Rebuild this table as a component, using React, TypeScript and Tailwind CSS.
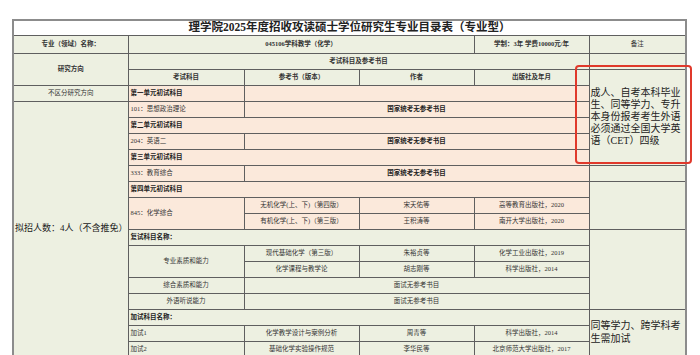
import type { ReactNode } from "react";

const GREEN = "bg-[#edf0e1]";
const PINK = "bg-[#fbe9db]";

type CellProps = {
  children?: ReactNode;
  className?: string;
  colSpan?: number;
  rowSpan?: number;
};

const Td = ({ children, className = "", colSpan, rowSpan }: CellProps) => (
  <td
    colSpan={colSpan}
    rowSpan={rowSpan}
    className={`border border-[#5f5f5f] p-0 px-[2px] text-[6.5px] leading-none text-[#333] ${className}`}>
    {children}
  </td>
);

const remarkTop = "成人、自考本科毕业生、同等学力、专升本身份报考考生外语必须通过全国大学英语（CET）四级";

const App = () => {
  return (
    <div
      className="relative w-[700px] h-[355px] overflow-hidden bg-white pt-[19px] pl-[12px]"
      style={{ fontFamily: '"Liberation Serif", "Noto Sans CJK SC", serif' }}>
      <table className="table-fixed border-collapse border-2 border-[#8c8c8c] w-[673px]">
        <colgroup>
          <col className="w-[115px]" />
          <col className="w-[116px]" />
          <col className="w-[115px]" />
          <col className="w-[115px]" />
          <col className="w-[115px]" />
          <col className="w-[97px]" />
        </colgroup>
        <tbody>
          <tr className="h-[15px]">
            <Td colSpan={6} className="bg-white text-center !text-[11.5px] font-bold !text-[#222]">
              理学院2025年度招收攻读硕士学位研究生专业目录表（专业型）
            </Td>
          </tr>
          <tr className="h-[18px]">
            <Td className={`${GREEN} text-center font-bold`}>专业（领域）名称：</Td>
            <Td colSpan={3} className={`${GREEN} text-center font-bold`}>
              045106学科教学（化学）
            </Td>
            <Td className={`${GREEN} text-center font-bold`}>学制：3年 学费10000元/年</Td>
            <Td className={`${GREEN} text-center`}>备注</Td>
          </tr>
          <tr className="h-[16px]">
            <Td rowSpan={2} className={`${GREEN} text-center font-bold`}>研究方向</Td>
            <Td colSpan={4} className={`${GREEN} text-center font-bold`}>考试科目及参考书目</Td>
            <Td className={GREEN} />
          </tr>
          <tr className="h-[16px]">
            <Td className={`${GREEN} text-center font-bold`}>考试科目</Td>
            <Td className={`${GREEN} text-center font-bold`}>参考书（版本）</Td>
            <Td className={`${GREEN} text-center font-bold`}>作者</Td>
            <Td className={`${GREEN} text-center font-bold`}>出版社及年月</Td>
            <Td rowSpan={6} className={`${GREEN} !px-[1px] align-middle !text-[10px] !leading-[12px] !text-[#222]`}>
              {remarkTop}
            </Td>
          </tr>
          <tr className="h-[16px]">
            <Td className={`${GREEN} text-center`}>不区分研究方向</Td>
            <Td className={`${PINK} font-bold !text-[#222]`}>第一单元初试科目</Td>
            <Td colSpan={3} className={PINK} />
          </tr>
          <tr className="h-[16px]">
            <Td rowSpan={16} className={`${GREEN} whitespace-nowrap !px-[1px] !text-[9px] !text-[#222]`}>
              拟招人数：4人（不含推免）
            </Td>
            <Td className={PINK}>101：思想政治理论</Td>
            <Td colSpan={3} className={`${PINK} text-center font-bold !text-[#222]`}>国家统考无参考书目</Td>
          </tr>
          <tr className="h-[16px]">
            <Td colSpan={4} className={`${PINK} font-bold !text-[#222]`}>第二单元初试科目</Td>
          </tr>
          <tr className="h-[16px]">
            <Td className={PINK}>204：英语二</Td>
            <Td colSpan={3} className={`${PINK} text-center font-bold !text-[#222]`}>国家统考无参考书目</Td>
          </tr>
          <tr className="h-[16px]">
            <Td colSpan={4} className={`${PINK} font-bold !text-[#222]`}>第三单元初试科目</Td>
          </tr>
          <tr className="h-[16px]">
            <Td className={PINK}>333：教育综合</Td>
            <Td colSpan={3} className={`${PINK} text-center font-bold !text-[#222]`}>国家统考无参考书目</Td>
            <Td className={GREEN} />
          </tr>
          <tr className="h-[16px]">
            <Td colSpan={4} className={`${PINK} font-bold !text-[#222]`}>第四单元初试科目</Td>
            <Td rowSpan={3} className={GREEN} />
          </tr>
          <tr className="h-[16px]">
            <Td rowSpan={2} className={PINK}>845：化学综合</Td>
            <Td className={`${PINK} text-center`}>无机化学(上、下)（第四版）</Td>
            <Td className={`${PINK} text-center`}>宋天佑等</Td>
            <Td className={`${PINK} text-center`}>高等教育出版社，2020</Td>
          </tr>
          <tr className="h-[16px]">
            <Td className={`${PINK} text-center`}>有机化学(上、下)（第三版）</Td>
            <Td className={`${PINK} text-center`}>王积涛等</Td>
            <Td className={`${PINK} text-center`}>南开大学出版社，2020</Td>
          </tr>
          <tr className="h-[16px]">
            <Td colSpan={4} className={`${GREEN} font-bold !text-[#222]`}>复试科目名称：</Td>
            <Td rowSpan={5} className={GREEN} />
          </tr>
          <tr className="h-[16px]">
            <Td rowSpan={2} className={`${GREEN} text-center`}>专业素质和能力</Td>
            <Td className={`${GREEN} text-center`}>现代基础化学（第三版）</Td>
            <Td className={`${GREEN} text-center`}>朱裕贞等</Td>
            <Td className={`${GREEN} text-center`}>化学工业出版社，2019</Td>
          </tr>
          <tr className="h-[16px]">
            <Td className={`${GREEN} text-center`}>化学课程与教学论</Td>
            <Td className={`${GREEN} text-center`}>胡志刚等</Td>
            <Td className={`${GREEN} text-center`}>科学出版社，2014</Td>
          </tr>
          <tr className="h-[16px]">
            <Td className={`${GREEN} text-center`}>综合素质和能力</Td>
            <Td colSpan={3} className={`${GREEN} text-center`}>面试无参考书目</Td>
          </tr>
          <tr className="h-[16px]">
            <Td className={`${GREEN} text-center`}>外语听说能力</Td>
            <Td colSpan={3} className={`${GREEN} text-center`}>面试无参考书目</Td>
          </tr>
          <tr className="h-[16px]">
            <Td colSpan={4} className={`${GREEN} font-bold !text-[#222]`}>加试科目名称：</Td>
            <Td rowSpan={3} className={`${GREEN} !px-[1px] !text-[10px] !leading-[12.5px] !text-[#222]`}>
              同等学力、跨学科考生需加试
            </Td>
          </tr>
          <tr className="h-[16px]">
            <Td className={GREEN}>加试1</Td>
            <Td className={`${GREEN} text-center`}>化学教学设计与案例分析</Td>
            <Td className={`${GREEN} text-center`}>周青等</Td>
            <Td className={`${GREEN} text-center`}>科学出版社，2014</Td>
          </tr>
          <tr className="h-[16px]">
            <Td className={GREEN}>加试2</Td>
            <Td className={`${GREEN} text-center`}>基础化学实验操作规范</Td>
            <Td className={`${GREEN} text-center`}>李华民等</Td>
            <Td className={`${GREEN} text-center`}>北京师范大学出版社，2017</Td>
          </tr>
        </tbody>
      </table>
      <div className="absolute left-[575px] top-[65px] w-[117px] h-[99px] rounded-[4px] border-2 border-[#e0392b]" />
    </div>
  );
};

export default App;
